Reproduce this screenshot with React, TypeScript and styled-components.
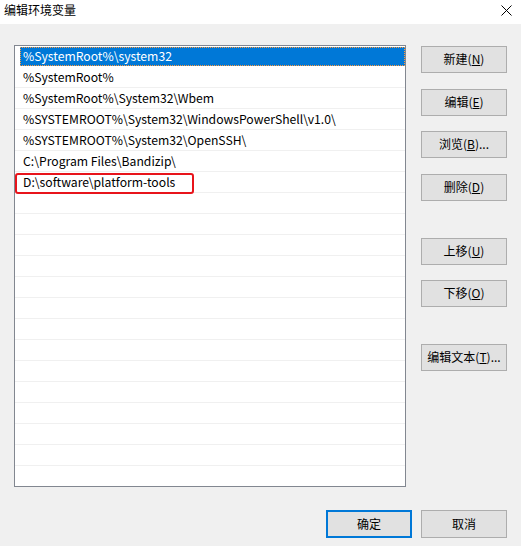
import React from "react";
import styled, { createGlobalStyle } from "styled-components";

const Global = createGlobalStyle`
  html, body { margin: 0; padding: 0; background: #f0f0f0; }
  body { font-family: "Noto Sans CJK SC", "Noto Sans", sans-serif; }
`;

const Window = styled.div`
  width: 521px;
  height: 546px;
  display: flex;
  flex-direction: column;
  background: #f0f0f0;
  overflow: hidden;
  font-family: "Noto Sans CJK SC", "Noto Sans", sans-serif;
  font-size: 12px;
  color: #000;
`;

const TitleBar = styled.div`
  height: 24px;
  flex: none;
  background: #fff;
  display: flex;
  align-items: center;
  justify-content: space-between;
  padding: 0 9px 4px 4px;
  box-sizing: border-box;
`;

const Title = styled.span`
  font-size: 12px;
  line-height: 1;
  color: #000;
`;

const Body = styled.div`
  flex: 1;
  display: flex;
  flex-direction: column;
  padding: 21px 14px 8px 14px;
`;

const Main = styled.div`
  display: flex;
  gap: 15px;
`;

const List = styled.div`
  width: 392px;
  height: 442px;
  box-sizing: border-box;
  border: 1px solid #828790;
  background: #fff;
  overflow: hidden;
  position: relative;
`;

const Row = styled.div<{ $selected?: boolean }>`
  height: 21px;
  box-sizing: border-box;
  border-bottom: 1px solid ${(p) => (p.$selected ? "transparent" : "#f0f0f0")};
  display: flex;
  align-items: stretch;
`;

const RowInner = styled.div<{ $selected?: boolean }>`
  flex: 1;
  margin-left: 5px;
  padding-left: 2px;
  display: flex;
  align-items: center;
  box-sizing: border-box;
  white-space: nowrap;
  font-size: 12.2px;
  line-height: 1;
  background: ${(p) => (p.$selected ? "#0078d7" : "transparent")};
  color: ${(p) => (p.$selected ? "#fff" : "#000")};
  border: 1px dotted ${(p) => (p.$selected ? "#ff9a3c" : "transparent")};
  margin-top: ${(p) => (p.$selected ? "1px" : "0")};
`;

const Highlight = styled.div`
  position: absolute;
  left: 0;
  top: 127px;
  width: 179px;
  height: 21px;
  border: 2px solid #e8141b;
  border-radius: 3px;
  box-sizing: border-box;
  pointer-events: none;
`;

const Side = styled.div`
  display: flex;
  flex-direction: column;
  padding-top: 1px;
  gap: 15.5px;
`;

const Spacer = styled.div`
  height: 6px;
`;

const Button = styled.button<{ $default?: boolean; $h?: number }>`
  width: 86px;
  height: ${(p) => p.$h ?? 27}px;
  box-sizing: border-box;
  background: #e1e1e1;
  border: ${(p) => (p.$default ? "2px solid #0078d7" : "1px solid #adadad")};
  font-family: "Noto Sans CJK SC", "Noto Sans", sans-serif;
  font-size: 12px;
  line-height: 1;
  color: #000;
  padding: 0 0 1px 0;
  display: flex;
  align-items: center;
  justify-content: center;
  white-space: nowrap;
`;

const Key = styled.span`
  text-decoration: underline;
  text-underline-offset: 1px;
`;

const Footer = styled.div`
  display: flex;
  justify-content: flex-end;
  gap: 9px;
  margin-top: 23px;
`;

const CloseIcon = () => (
  <svg width="11" height="11" viewBox="0 0 11 11">
    <path d="M0.5 0.5 L10.5 10.5 M10.5 0.5 L0.5 10.5" stroke="#000" strokeWidth="1" fill="none" />
  </svg>
);

const items = [
  "%SystemRoot%\\system32",
  "%SystemRoot%",
  "%SystemRoot%\\System32\\Wbem",
  "%SYSTEMROOT%\\System32\\WindowsPowerShell\\v1.0\\",
  "%SYSTEMROOT%\\System32\\OpenSSH\\",
  "C:\\Program Files\\Bandizip\\",
  "D:\\software\\platform-tools",
];

export default function App() {
  const rows = [...items, ...Array(14).fill("")];
  return (
    <>
      <Global />
      <Window>
        <TitleBar>
          <Title>编辑环境变量</Title>
          <CloseIcon />
        </TitleBar>
        <Body>
          <Main>
            <List>
              {rows.map((t, i) => (
                <Row key={i} $selected={i === 0}>
                  <RowInner $selected={i === 0}>{t}</RowInner>
                </Row>
              ))}
              <Highlight />
            </List>
            <Side>
              <Button>新建(<Key>N</Key>)</Button>
              <Button>编辑(<Key>E</Key>)</Button>
              <Button>浏览(<Key>B</Key>)...</Button>
              <Button>删除(<Key>D</Key>)</Button>
              <Spacer />
              <Button>上移(<Key>U</Key>)</Button>
              <Button>下移(<Key>O</Key>)</Button>
              <Spacer />
              <Button>编辑文本(<Key>T</Key>)...</Button>
            </Side>
          </Main>
          <Footer>
            <Button $default $h={28}>确定</Button>
            <Button $h={28}>取消</Button>
          </Footer>
        </Body>
      </Window>
    </>
  );
}
